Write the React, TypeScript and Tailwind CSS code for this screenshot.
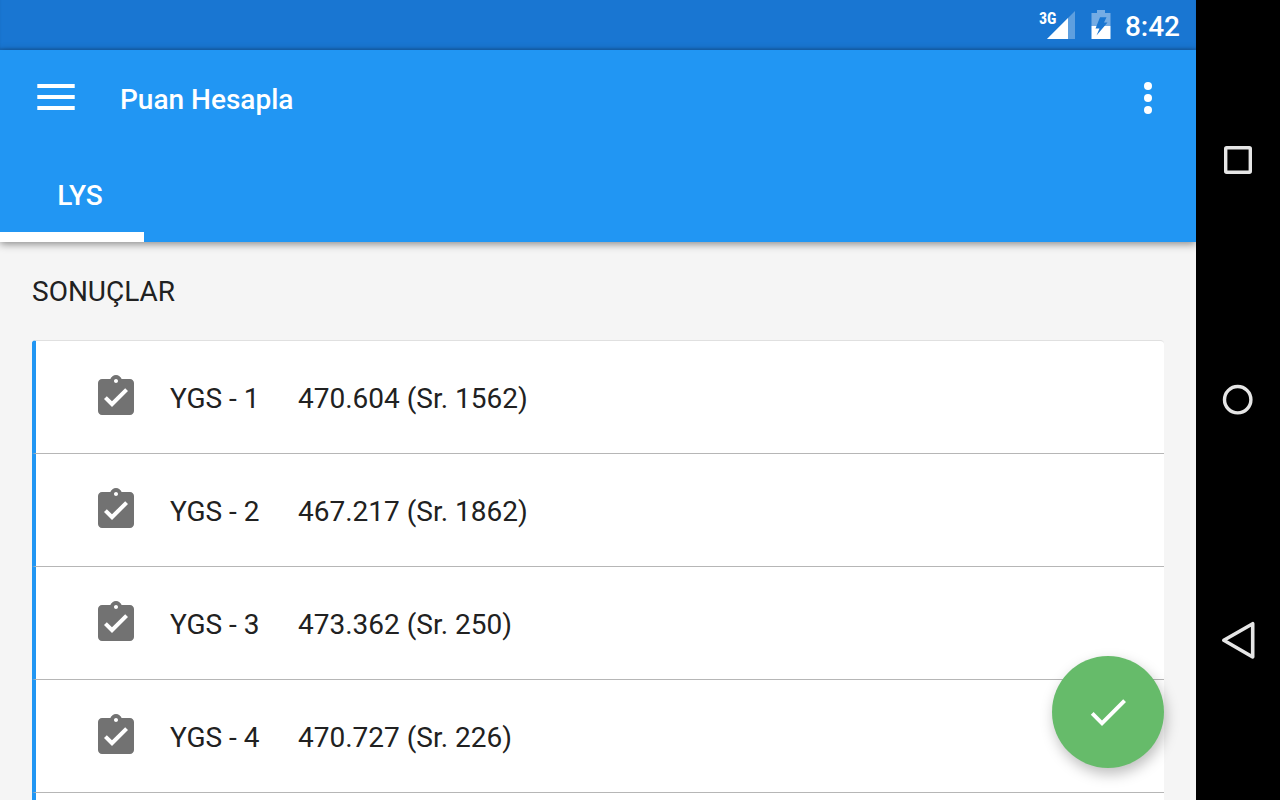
import React from "react";

type Result = { name: string; score: string };

const results: Result[] = [
  { name: "YGS - 1", score: "470.604 (Sr. 1562)" },
  { name: "YGS - 2", score: "467.217 (Sr. 1862)" },
  { name: "YGS - 3", score: "473.362 (Sr. 250)" },
  { name: "YGS - 4", score: "470.727 (Sr. 226)" },
];

function SignalIcon() {
  return (
    <svg viewBox="0 0 28 28" className="size-7" fill="#fff" aria-hidden="true">
      <path d="M28 0V28H0z" opacity=".3" />
      <path d="M21 7V28H0z" />
    </svg>
  );
}

const batteryShape =
  "M6 0H14V3H19.5V29H0.5V3H6zM9 7.300L4.500 18.500H8.500L5.500 25.500L16.500 12.500H13L15.500 7.300z";

function BatteryIcon() {
  return (
    <svg viewBox="0 0 20 30" className="h-[30px] w-5" fill="#fff" aria-hidden="true">
      <clipPath id="battery-empty">
        <rect width="20" height="16" />
      </clipPath>
      <clipPath id="battery-charged">
        <rect y="16" width="20" height="14" />
      </clipPath>
      <path d={batteryShape} fillRule="evenodd" opacity=".4" clipPath="url(#battery-empty)" />
      <path d={batteryShape} fillRule="evenodd" clipPath="url(#battery-charged)" />
    </svg>
  );
}

function StatusBar() {
  return (
    <div className="flex h-[50px] shrink-0 items-center justify-end bg-[#1976d2] pr-4 shadow-[inset_0_-2px_2px_rgba(0,0,0,0.1)]">
      <div className="relative flex pl-2">
        <span className="absolute top-0 left-0 font-['Roboto_Condensed','Roboto',sans-serif] text-[16px] leading-none font-bold">
          3G
        </span>
        <SignalIcon />
      </div>
      <div className="ml-4">
        <BatteryIcon />
      </div>
      <time className="ml-3.5 pt-1 text-[28px] leading-8 font-medium">8:42</time>
    </div>
  );
}

function AppBar() {
  return (
    <header className="relative shrink-0 bg-[#2196f3] shadow-[0_2px_8px_rgba(0,0,0,0.45)]">
      <div className="flex h-24 items-center pr-6 pl-8">
        <button type="button" aria-label="Menü" className="flex size-12 items-center justify-center">
          <svg viewBox="0 0 48 48" className="size-12" fill="#fff" aria-hidden="true">
            <path d="M5.300 10H42.700V14H5.300zM5.300 21H42.700V25H5.300zM5.300 32H42.700V36H5.300z" />
          </svg>
        </button>
        <h1 className="ml-10 flex-1 pt-1 text-[28px] leading-8 font-medium">Puan Hesapla</h1>
        <button type="button" aria-label="Diğer seçenekler" className="size-12">
          <svg viewBox="0 0 24 24" className="size-12" fill="#fff" aria-hidden="true">
            <circle cx="12" cy="6" r="2" />
            <circle cx="12" cy="12" r="2" />
            <circle cx="12" cy="18" r="2" />
          </svg>
        </button>
      </div>
      <nav className="flex h-24">
        <a
          href="#lys"
          aria-current="page"
          className="flex w-36 items-center justify-center border-b-10 border-white pt-3.5 pl-4 text-[28px] leading-8 font-medium"
        >
          LYS
        </a>
      </nav>
    </header>
  );
}

function TaskIcon() {
  return (
    <svg viewBox="0 0 24 24" className="size-12 shrink-0" fill="#727272" aria-hidden="true">
      <path d="M19 3h-4.180C14.400 1.840 13.300 1 12 1c-1.300 0-2.400.84-2.820 2H5c-1.100 0-2 .9-2 2v14c0 1.100.9 2 2 2h14c1.100 0 2-.9 2-2V5c0-1.100-.9-2-2-2zm-7 0c.55 0 1 .45 1 1s-.45 1-1 1-1-.45-1-1 .45-1 1-1zm-2 14l-4-4 1.410-1.410L10 14.170l6.590-6.590L18 9l-8 8z" />
    </svg>
  );
}

function Results() {
  return (
    <main className="flex min-h-0 flex-1 flex-col overflow-hidden px-8 pt-8 text-[#212121]">
      <h2 className="text-[28px] leading-9">SONUÇLAR</h2>
      <ul className="mt-[30px] min-h-0 flex-1 rounded-t-[4px] border-t border-l-4 border-t-[#e0e0e0] border-l-[#2196f3] bg-white">
        {results.map((result) => (
          <li
            key={result.name}
            className="-ml-1 flex h-[113px] items-center border-b border-l-4 border-b-[#b6b6b6] border-l-[#2196f3] pl-14 text-[28px] leading-8 first:rounded-tl-[3px]"
          >
            <TaskIcon />
            <span className="ml-[30px] w-32 pt-1">{result.name}</span>
            <span className="pt-1">{result.score}</span>
          </li>
        ))}
      </ul>
    </main>
  );
}

function SystemNav() {
  return (
    <nav className="flex w-21 shrink-0 flex-col bg-black py-10">
      <button type="button" aria-label="Son uygulamalar" className="flex flex-1 items-center justify-center">
        <svg viewBox="0 0 40 40" className="size-10" fill="none" stroke="#e6e6e6" strokeWidth="3.400" aria-hidden="true">
          <rect x="7.700" y="7.700" width="24.600" height="24.600" rx="1" />
        </svg>
      </button>
      <button type="button" aria-label="Ana ekran" className="flex flex-1 items-center justify-center">
        <svg viewBox="0 0 40 40" className="size-10" fill="none" stroke="#e6e6e6" strokeWidth="3.400" aria-hidden="true">
          <circle cx="19.700" cy="19.700" r="13.200" />
        </svg>
      </button>
      <button type="button" aria-label="Geri" className="flex flex-1 items-center justify-center">
        <svg
          viewBox="0 0 40 40"
          className="size-10"
          fill="none"
          stroke="#e6e6e6"
          strokeWidth="3.600"
          strokeLinejoin="round"
          aria-hidden="true"
        >
          <path d="M34.700 3.700V37L5.800 20.300z" />
        </svg>
      </button>
    </nav>
  );
}

export default function App() {
  return (
    <div className="flex h-screen bg-black font-['Roboto',sans-serif]">
      <div className="relative flex min-w-0 flex-1 flex-col overflow-hidden bg-[#f5f5f5] text-white">
        <StatusBar />
        <AppBar />
        <Results />
        <button
          type="button"
          aria-label="Onayla"
          className="absolute right-8 bottom-8 flex size-28 items-center justify-center rounded-full bg-[#66bb6a] shadow-[2px_6px_14px_rgba(0,0,0,0.26)]"
        >
          <svg viewBox="0 0 24 24" className="size-12" fill="#fff" aria-hidden="true">
            <path d="M9 16.200L4.800 12l-1.400 1.400L9 19 21 7l-1.400-1.400L9 16.200z" />
          </svg>
        </button>
      </div>
      <SystemNav />
    </div>
  );
}
